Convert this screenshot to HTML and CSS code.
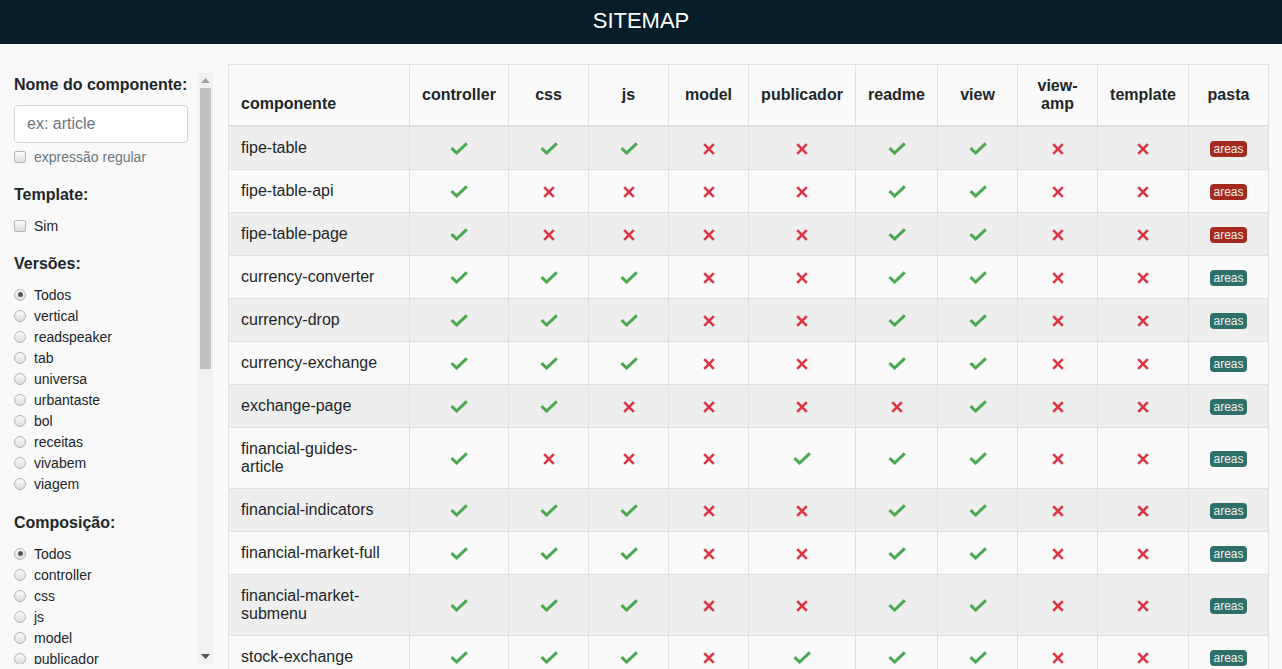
FILE: index.html
```html
<!DOCTYPE html>
<html lang="pt">
<head>
<meta charset="utf-8">
<title>Sitemap</title>
<link rel="stylesheet" href="styles.css">
</head>
<body>
<header class="topbar"><h1 class="title">SITEMAP</h1></header>
<main class="layout">
  <div class="sidebar-wrap">
  <aside class="sidebar">
    <section class="filter first">
      <h2 class="filter-title">Nome do componente:</h2>
      <input class="text-input" type="text" placeholder="ex: article">
      <label class="opt muted"><input type="checkbox" class="box"> expressão regular</label>
    </section>
    <section class="filter">
      <h2 class="filter-title">Template:</h2>
      <label class="opt"><input type="checkbox" class="box"> Sim</label>
    </section>
    <section class="filter">
      <h2 class="filter-title">Versões:</h2>
      <label class="opt"><input type="radio" name="v" class="dot" checked> Todos</label>
      <label class="opt"><input type="radio" name="v" class="dot"> vertical</label>
      <label class="opt"><input type="radio" name="v" class="dot"> readspeaker</label>
      <label class="opt"><input type="radio" name="v" class="dot"> tab</label>
      <label class="opt"><input type="radio" name="v" class="dot"> universa</label>
      <label class="opt"><input type="radio" name="v" class="dot"> urbantaste</label>
      <label class="opt"><input type="radio" name="v" class="dot"> bol</label>
      <label class="opt"><input type="radio" name="v" class="dot"> receitas</label>
      <label class="opt"><input type="radio" name="v" class="dot"> vivabem</label>
      <label class="opt"><input type="radio" name="v" class="dot"> viagem</label>
    </section>
    <section class="filter wide">
      <h2 class="filter-title">Composição:</h2>
      <label class="opt"><input type="radio" name="c" class="dot" checked> Todos</label>
      <label class="opt"><input type="radio" name="c" class="dot"> controller</label>
      <label class="opt"><input type="radio" name="c" class="dot"> css</label>
      <label class="opt"><input type="radio" name="c" class="dot"> js</label>
      <label class="opt"><input type="radio" name="c" class="dot"> model</label>
      <label class="opt"><input type="radio" name="c" class="dot"> publicador</label>
      <label class="opt"><input type="radio" name="c" class="dot"> readme</label>
      <label class="opt"><input type="radio" name="c" class="dot"> view</label>
      <label class="opt"><input type="radio" name="c" class="dot"> view-amp</label>
      <label class="opt"><input type="radio" name="c" class="dot"> template</label>
    </section>
  </aside>
  <div class="scrollbar" aria-hidden="true">
    <div class="sb-btn"><svg width="9" height="5" viewBox="0 0 9 5"><path d="M0 5 L4.5 0 L9 5 Z" fill="#a3a3a3"/></svg></div>
    <div class="sb-track"><div class="sb-thumb"></div></div>
    <div class="sb-btn"><svg width="9" height="5" viewBox="0 0 9 5"><path d="M0 0 L9 0 L4.5 5 Z" fill="#505050"/></svg></div>
  </div>
  </div>

  <div class="content">
    <table class="grid">
      <colgroup>
        <col class="c-name"><col class="c-ctrl"><col class="c-std"><col class="c-std"><col class="c-std"><col class="c-pub"><col class="c-readme"><col class="c-std"><col class="c-std"><col class="c-tpl"><col class="c-std">
      </colgroup>
      <thead>
        <tr>
          <th class="th-name">componente</th>
          <th>controller</th><th>css</th><th>js</th><th>model</th><th>publicador</th><th>readme</th><th>view</th><th>view-<br>amp</th><th>template</th><th>pasta</th>
        </tr>
      </thead>
      <tbody id="rows"></tbody>
    </table>
  </div>
</main>
<script src="app.js"></script>
</body>
</html>
```

FILE: app.js
```js
(function () {
  var data = [
    ["fipe-table", "111001100", "r"],
    ["fipe-table-api", "100001100", "r"],
    ["fipe-table-page", "100001100", "r"],
    ["currency-converter", "111001100", "t"],
    ["currency-drop", "111001100", "t"],
    ["currency-exchange", "111001100", "t"],
    ["exchange-page", "110000100", "t"],
    ["financial-guides-<br>article", "100011100", "t"],
    ["financial-indicators", "111001100", "t"],
    ["financial-market-full", "111001100", "t"],
    ["financial-market-<br>submenu", "111001100", "t"],
    ["stock-exchange", "111011100", "t"]
  ];
  var yes = '<svg class="ico" width="18" height="13" viewBox="0 0 18 13"><path d="M1.5 6.2 L6.6 11 L16.8 1.3" fill="none" stroke="#4aa84e" stroke-width="3"/></svg>';
  var no = '<svg class="ico" width="12" height="12" viewBox="0 0 12 12"><path d="M1.2 1.2 L10.8 10.8 M10.8 1.2 L1.2 10.8" fill="none" stroke="#dc3545" stroke-width="2.6"/></svg>';
  var html = "";
  data.forEach(function (r) {
    html += "<tr><td class=\"td-name\">" + r[0] + "</td>";
    for (var i = 0; i < r[1].length; i++) {
      html += "<td class=\"td-mark\">" + (r[1][i] === "1" ? yes : no) + "</td>";
    }
    html += "<td class=\"td-mark\"><span class=\"badge " + (r[2] === "r" ? "badge-red" : "badge-teal") + "\">areas</span></td></tr>";
  });
  document.getElementById("rows").innerHTML = html;
})();
```

FILE: styles.css
```css
html, body {
  margin: 0;
  height: 100%;
  overflow: hidden;
}
body {
  background: #f9f9f9;
  font-family: "Liberation Sans", Arial, sans-serif;
  color: #212529;
}
.topbar {
  height: 44px;
  background: #061e29;
  display: flex;
  align-items: center;
  justify-content: center;
}
.title {
  margin: 0;
  color: #ffffff;
  font-size: 22px;
  font-weight: 400;
  line-height: 1;
  padding-bottom: 3px;
}
.layout {
  display: flex;
  align-items: flex-start;
  gap: 15px;
  padding: 20px 13px 0 14px;
  height: 625px;
  box-sizing: border-box;
  overflow: hidden;
}
.sidebar-wrap {
  flex: 0 0 199px;
  width: 199px;
  height: 591px;
  margin-top: 9px;
  display: flex;
}
.sidebar {
  flex: 1 1 auto;
  min-width: 0;
  height: 100%;
  overflow: hidden;
  box-sizing: border-box;
  padding-top: 2px;
}
.scrollbar {
  flex: 0 0 15px;
  display: flex;
  flex-direction: column;
  background: #f1f1f1;
}
.sb-btn {
  height: 15px;
  flex: 0 0 15px;
  display: flex;
  align-items: center;
  justify-content: center;
}
.sb-btn svg {
  display: block;
}
.sb-track {
  flex: 1 1 auto;
}
.sb-thumb {
  height: 281px;
  margin: 0 2px;
  background: #c1c1c1;
}
.filter {
  margin-top: 18px;
}
.filter.first {
  margin-top: 0;
}
.filter.wide {
  margin-top: 19px;
}
.filter-title {
  margin: 0 0 10px;
  font-size: 16px;
  font-weight: 700;
  line-height: 20px;
}
.text-input {
  display: block;
  box-sizing: border-box;
  width: 174px;
  height: 38px;
  margin: 0 0 3px;
  padding: 6px 12px;
  border: 1px solid #ced4da;
  border-radius: 4px;
  background: #fff;
  font-family: inherit;
  font-size: 16px;
  color: #495057;
}
.text-input::placeholder {
  color: #6c757d;
}
.opt {
  display: flex;
  align-items: center;
  height: 21px;
  font-size: 14px;
  color: #212529;
  white-space: nowrap;
}
.opt.muted {
  color: #6c757d;
}
.box, .dot {
  -webkit-appearance: none;
  appearance: none;
  box-sizing: border-box;
  width: 12px;
  height: 12px;
  margin: 0 8px 0 0;
  border: 1px solid #b5b5b5;
  background: linear-gradient(#fbfbfb, #dedede);
  flex: 0 0 12px;
}
.box {
  border-radius: 2px;
}
.dot {
  border-radius: 50%;
  position: relative;
}
.dot:checked::after {
  content: "";
  position: absolute;
  left: 2.5px;
  top: 2.5px;
  width: 5px;
  height: 5px;
  border-radius: 50%;
  background: #555;
}
.content {
  flex: 0 0 1041px;
}
.grid {
  width: 1041px;
  table-layout: fixed;
  border-collapse: collapse;
  font-size: 16px;
  line-height: 18px;
}
.c-name { width: 181px; }
.c-ctrl { width: 99px; }
.c-std { width: 80px; }
.c-pub { width: 107px; }
.c-readme { width: 82px; }
.c-tpl { width: 91px; }
.grid th, .grid td {
  border: 1px solid #dee2e6;
  padding: 12px;
}
.grid th {
  font-weight: 700;
  text-align: center;
  vertical-align: middle;
  border-bottom: 2px solid #dee2e6;
  background: #fafafa;
  padding: 12px 4px 12px;
}
.grid th.th-name {
  text-align: left;
  vertical-align: bottom;
  padding-left: 12px;
}
.grid tbody tr:nth-child(odd) td {
  background: #eeeeee;
}
.grid tbody tr:nth-child(even) td {
  background: #fafafa;
}
.td-name {
  vertical-align: middle;
}
.td-mark {
  text-align: center;
  vertical-align: middle;
  padding-left: 4px !important;
  padding-right: 4px !important;
}
.ico {
  display: inline-block;
  vertical-align: middle;
}
.badge {
  display: inline-block;
  height: 16px;
  line-height: 16px;
  padding: 0 3px;
  border-radius: 4px;
  font-size: 12px;
  color: #f0f0f0;
  vertical-align: middle;
}
.badge-red { background: #a52a1e; }
.badge-teal { background: #2e6f6a; }
```
